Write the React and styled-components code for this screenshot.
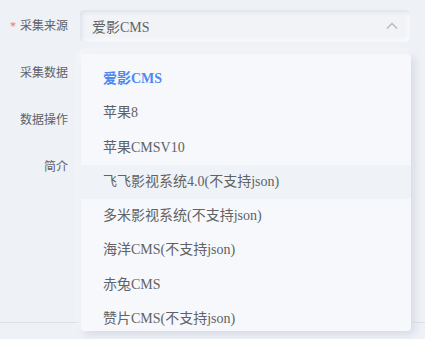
import React from 'react'
import styled, { createGlobalStyle } from 'styled-components'

const GlobalStyle = createGlobalStyle`
  html, body {
    margin: 0;
    padding: 0;
    background: #eef1f6;
  }
  body {
    font-family: "Liberation Serif", "Noto Sans CJK SC", serif;
    font-size: 14px;
    color: #606266;
  }
`

const Page = styled.div`
  position: relative;
  width: 425px;
  height: 339px;
  overflow: hidden;
  background: #eef1f6;
`

const Form = styled.div`
  display: flex;
  flex-direction: column;
  gap: 15px;
  padding-top: 10px;
  height: 323px;
  border-bottom: 1px solid #d9dee7;
  box-sizing: border-box;
`

const Item = styled.div`
  display: flex;
  align-items: center;
  height: 32px;
`

const Label = styled.label`
  width: 80px;
  box-sizing: border-box;
  padding-right: 12px;
  text-align: right;
  line-height: 32px;
  font-size: 12px;
  color: #606266;
`

const Star = styled.span`
  color: #f56c6c;
  margin-right: 4px;
`

const SelectBox = styled.div`
  flex: none;
  width: 330px;
  height: 32px;
  box-sizing: border-box;
  display: flex;
  align-items: center;
  justify-content: space-between;
  padding: 0 11px 0 12px;
  border-radius: 4px;
  background: #f1f3f7;
  box-shadow: inset 2px 2px 4px #dde1e9, inset -2px -2px 4px #fbfcfe;
  color: #606266;
`

const Arrow = styled.svg`
  width: 14px;
  height: 14px;
`

const Dropdown = styled.div`
  position: absolute;
  left: 81px;
  top: 54px;
  width: 330px;
  height: 277px;
  padding-top: 8px;
  box-sizing: border-box;
  border-radius: 4px;
  background: #f6f8fb;
  box-shadow: 3px 3px 9px #d3d8e2, -2px -2px 6px #fbfcfe;
  overflow: hidden;
`

const Caret = styled.div`
  position: absolute;
  left: 159px;
  top: -6px;
  width: 0;
  height: 0;
  border-left: 6px solid transparent;
  border-right: 6px solid transparent;
  border-bottom: 6px solid #f6f8fb;
`

const Option = styled.div`
  height: 34.3px;
  line-height: 34px;
  padding: 0 20px 0 22px;
  white-space: nowrap;
  color: ${({ selected }) => (selected ? '#4d8af0' : '#606266')};
  font-weight: ${({ selected }) => (selected ? 700 : 400)};
  background: ${({ hover }) => (hover ? '#eff2f6' : 'transparent')};
`

const options = [
  '爱影CMS',
  '苹果8',
  '苹果CMSV10',
  '飞飞影视系统4.0(不支持json)',
  '多米影视系统(不支持json)',
  '海洋CMS(不支持json)',
  '赤兔CMS',
  '赞片CMS(不支持json)',
]

const App = () => (
  <Page>
    <GlobalStyle />
    <Form>
      <Item>
        <Label><Star>*</Star>采集来源</Label>
        <SelectBox>
          <span>爱影CMS</span>
          <Arrow viewBox="0 0 14 14">
            <path d="M2 9.5 L7 4.5 L12 9.5" fill="none" stroke="#b4b8bf" strokeWidth="1.3" />
          </Arrow>
        </SelectBox>
      </Item>
      <Item><Label>采集数据</Label></Item>
      <Item><Label>数据操作</Label></Item>
      <Item><Label>简介</Label></Item>
    </Form>
    <Dropdown>
      <Caret />
      { options.map((o, i) => (
        <Option key={ o } selected={ i === 0 } hover={ i === 3 }>{ o }</Option>
      )) }
    </Dropdown>
  </Page>
)

export default App
